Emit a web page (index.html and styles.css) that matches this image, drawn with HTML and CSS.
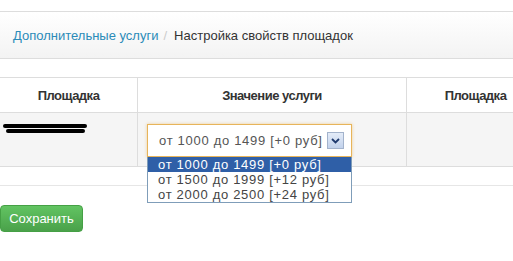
FILE: index.html
```html
<!DOCTYPE html>
<html lang="ru">
<head>
    <meta charset="UTF-8">
    <title>Настройка свойств площадок</title>
    <link rel="stylesheet" href="styles.css">
</head>
<body>
    <ul class="breadcrumb">
        <li><a href="#">Дополнительные услуги</a><span class="divider">/</span></li>
        <li class="active">Настройка свойств площадок</li>
    </ul>

    <table class="grid">
        <thead>
            <tr>
                <th class="col-place">Площадка</th>
                <th class="col-value">Значение услуги</th>
                <th class="col-place">Площадка</th>
                <th class="col-value"></th>
            </tr>
        </thead>
        <tbody>
            <tr class="striped">
                <td><span class="redacted"></span></td>
                <td>
                    <div class="combo">
                        <div class="combo-box">
                            <span class="combo-text">от 1000 до 1499 [+0 руб]</span>
                            <span class="combo-arrow">
                                <svg width="9" height="6" viewBox="0 0 9 6"><path d="M1 1 L4.5 4.5 L8 1" fill="none" stroke="#1f3a6e" stroke-width="1.8"/></svg>
                            </span>
                        </div>
                        <ul class="combo-list">
                            <li class="selected">от 1000 до 1499 [+0 руб]</li>
                            <li>от 1500 до 1999 [+12 руб]</li>
                            <li>от 2000 до 2500 [+24 руб]</li>
                        </ul>
                    </div>
                </td>
                <td></td>
                <td></td>
            </tr>
            <tr class="spacer">
                <td></td><td></td><td></td><td></td>
            </tr>
        </tbody>
    </table>

    <button class="btn-save">Сохранить</button>
</body>
</html>
```

FILE: styles.css
```css
body {
    margin: 0;
    font-family: "Liberation Sans", Arial, sans-serif;
    font-size: 13px;
    color: #333;
    background: #fff;
    overflow: hidden;
}
.breadcrumb {
    list-style: none;
    margin: 11px 0 0;
    padding: 0 13px;
    height: 46px;
    display: flex;
    align-items: center;
    border-top: 1px solid #ddd;
    border-bottom: 1px solid #ddd;
    background: linear-gradient(#ffffff, #f3f3f3);
}
.breadcrumb li {
    display: flex;
    align-items: center;
}
.breadcrumb a {
    color: #2b8bb8;
    text-decoration: none;
}
.breadcrumb .divider {
    color: #ccc;
    padding: 0 7px 0 5px;
}
.breadcrumb .active {
    color: #333;
}
.grid {
    margin-top: 18px;
    border-collapse: collapse;
    table-layout: fixed;
    width: 810px;
}
.grid th,
.grid td {
    border-left: 1px solid #ddd;
    border-top: 1px solid #ddd;
    padding: 0;
    vertical-align: top;
}
.grid th:first-child,
.grid td:first-child {
    border-left: none;
}
.grid th {
    height: 34px;
    font-weight: bold;
    text-align: center;
    vertical-align: middle;
    letter-spacing: -0.5px;
}
.col-place {
    width: 137px;
}
.col-value {
    width: 268px;
}
.striped td {
    background: #f5f5f5;
    height: 53px;
}
.spacer td {
    height: 18px;
    border-left: none;
    border-bottom: 1px solid #e6e6e6;
}
.redacted {
    display: block;
    position: relative;
    width: 84px;
    height: 10px;
    margin: 11px 0 0 3px;
}
.redacted::before,
.redacted::after {
    content: "";
    position: absolute;
    left: 0;
    right: 0;
    height: 4px;
    background: #000;
    border-radius: 2px;
}
.redacted::before {
    top: 0;
}
.redacted::after {
    top: 5px;
    left: 3px;
    right: 2px;
}
.combo {
    position: relative;
    margin: 11px 0 0 9px;
    width: 205px;
}
.combo-box {
    height: 31px;
    border: 1px solid #e7b45a;
    box-shadow: 0 0 3px rgba(231, 180, 90, 0.6);
    background: #fff;
    display: flex;
    align-items: center;
    padding: 0 7px 0 11px;
}
.combo-text {
    flex: 1;
    color: #555;
    letter-spacing: 0.7px;
}
.combo-arrow {
    width: 15px;
    height: 15px;
    border: 1px solid #a3b3cc;
    background: linear-gradient(#e4ecf8, #c2d2ec);
    display: flex;
    align-items: center;
    justify-content: center;
}
.combo-list {
    position: absolute;
    top: 33px;
    left: 0;
    width: 203px;
    margin: 0;
    padding: 0;
    list-style: none;
    background: #fff;
    border: 1px solid #7f9db9;
    border-top: none;
}
.combo-list li {
    height: 15px;
    line-height: 15px;
    padding-left: 10px;
    color: #444;
    letter-spacing: 0.7px;
}
.combo-list li.selected {
    background: #2f5fa7;
    color: #fff;
}
.btn-save {
    display: block;
    margin-top: 19px;
    width: 83px;
    height: 27px;
    padding: 0;
    font-family: "Liberation Sans", Arial, sans-serif;
    font-size: 13px;
    color: #fff;
    background: linear-gradient(#62c462, #4aa14a);
    border: 1px solid #45a045;
    border-radius: 4px;
}
```
